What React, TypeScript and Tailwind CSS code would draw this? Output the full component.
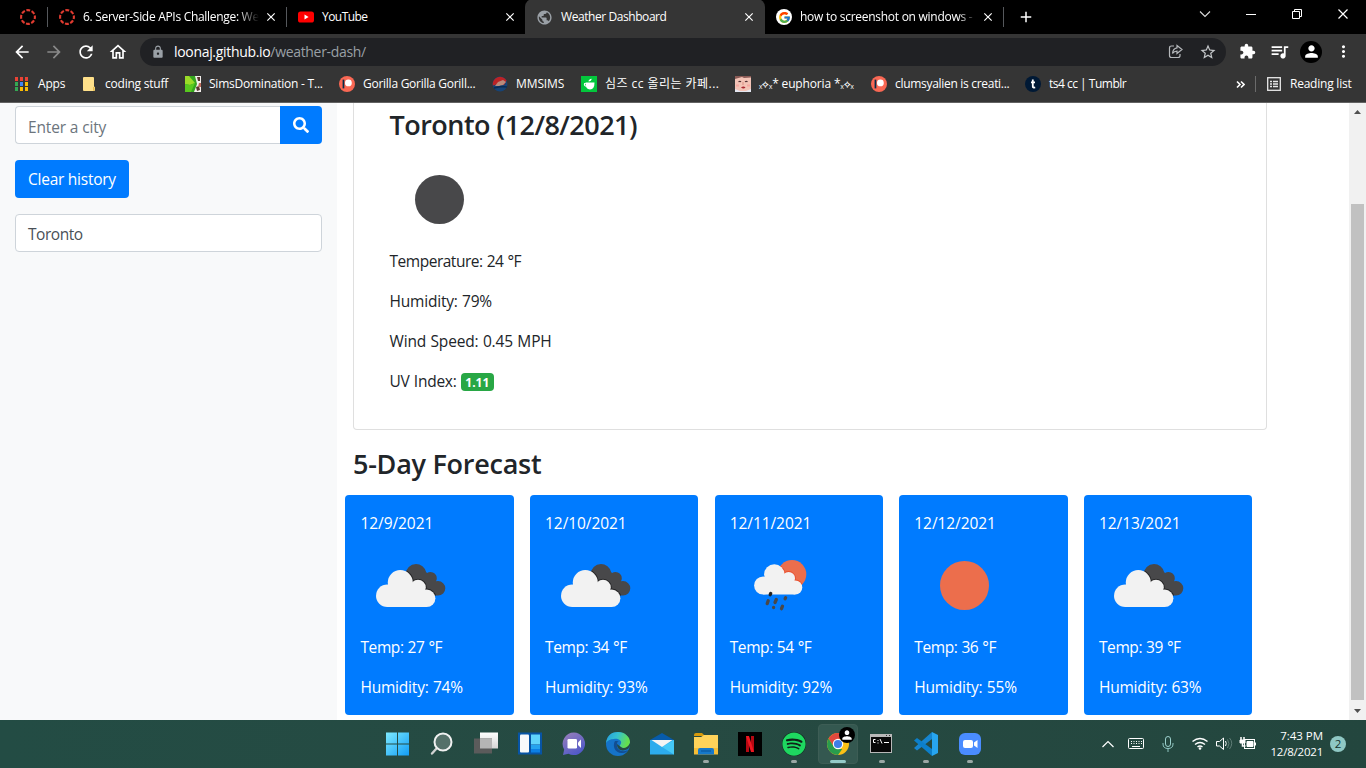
import React from "react";
import { FcGoogle } from "react-icons/fc";
import { FaSearch, FaSpotify } from "react-icons/fa";
import {
  MdArrowBack, MdArrowForward, MdRefresh, MdOutlineHome, MdLock, MdStarBorder,
  MdExtension, MdQueueMusic, MdPerson, MdMoreVert, MdPublic, MdClose, MdAdd,
} from "react-icons/md";

const CanvasRing = () => (
  <svg className="size-4 shrink-0" viewBox="0 0 16 16">
    <circle cx="8" cy="8" r="6.9" fill="none" stroke="#e03b30" strokeWidth="2.1" strokeDasharray="3.9 1.52" strokeDashoffset="1.9" />
  </svg>
);

const YouTube = () => (
  <svg className="size-4 shrink-0" viewBox="0 0 16 16">
    <rect y="2.5" width="16" height="11" rx="2.6" fill="#f00" />
    <path d="M6.5 5.6v4.8L10.6 8z" fill="#fff" />
  </svg>
);

const Patreon = () => (
  <svg className="size-4 shrink-0" viewBox="0 0 16 16">
    <circle cx="8" cy="8" r="8" fill="#f96854" />
    <rect x="3.6" y="3.6" width="1.7" height="8.8" fill="#052d49" />
    <circle cx="9.4" cy="6.9" r="3.4" fill="#fff" />
  </svg>
);

const AppsGrid = () => (
  <svg className="size-4 shrink-0" viewBox="0 0 16 16" shapeRendering="crispEdges">
    {["#ea4335", "#ea4335", "#ea4335", "#34a853", "#4285f4", "#fbbc04", "#34a853", "#fbbc04", "#fbbc04"].map((c, i) => (
      <rect key={i} x={1 + (i % 3) * 5} y={1 + Math.floor(i / 3) * 5} width="3" height="4" fill={c} />
    ))}
  </svg>
);

const Folder = () => (
  <svg className="size-4 shrink-0" viewBox="0 0 16 16">
    <path d="M2 2q0-1 1-1h9q1 0 1 1v8.500l1 .5v3q0 1-1 1H3q-1 0-1-1z" fill="#ffe08a" />
    <path d="M12 11h1.500v3.800H12z" fill="#e7bd4f" />
  </svg>
);

const Sims = () => (
  <svg className="size-4 shrink-0" viewBox="0 0 16 16">
    <path d="M0 0h16v16H0z" fill="#f3efec" />
    <path d="M0 0h10l2 8-3 8H0z" fill="#35a51e" />
    <path d="M0 0h4l6 7-5 2-5-1z" fill="#9bdc28" />
    <path d="M0 8l5 1 5-2-4 9H0z" fill="#58c91f" />
    <path d="M12 1h3v4h-2zM11 11l3-1 1 4-3 1z" fill="#59352f" />
    <path d="M14 7h2v4h-3z" fill="#bd6a5b" />
  </svg>
);

const MmSims = () => (
  <svg className="size-4 shrink-0" viewBox="0 0 16 16">
    <circle cx="8" cy="8" r="7.500" fill="#174375" />
    <path d="M.8 9.500A7.400 7.400 0 0 1 14.500 4.500L12 9 6 8z" fill="#bb2326" />
    <path d="M3 10l3-4 5-2 3 2-3 3-4 1z" fill="#b98b7c" />
    <path d="M2 12l7-1.500 6 .5" stroke="#0a2c55" fill="none" strokeWidth="1.500" />
  </svg>
);

const NaverCafe = () => (
  <svg className="size-4 shrink-0" viewBox="0 0 16 16">
    <path d="M0 0h16v16H0z" fill="#03c73c" />
    <path d="M4.500 6.500h9q0 7-4.500 7t-4.500-7z" fill="#fff" />
    <path d="M4.800 7.500H3.600q-.8 2 1.600 2.800" fill="none" stroke="#fff" strokeWidth="1.100" />
    <path d="M7.500 5.500q0-2.200 3.200-2.700-.2 2.400-3.200 2.700" fill="#fff" />
  </svg>
);

const Face = () => (
  <svg className="size-4 shrink-0" viewBox="0 0 16 16">
    <path d="M0 0h16v16H0z" fill="#f3c3b6" />
    <path d="M0 0h16v1.500L9 2 7 1 0 3z" fill="#8a5a55" />
    <path d="M3.500 5.800q1.500-1 2.500 0M10 5.800q1.500-1 2.500 0" stroke="#503033" strokeWidth="1.200" fill="none" />
    <path d="M8 6v3" stroke="#d78d80" />
    <path d="M6 11.500q2.500-2 4.500 0-2 2-4.500 0" fill="#a9262f" />
    <path d="M0 13l5 2h6l5-2v3H0z" fill="#e3e6f0" />
    <path d="M1 8.500h3v2H1zM12 8.500h3v2h-3z" fill="#f5a8a0" />
  </svg>
);

const Tumblr = () => (
  <svg className="size-4 shrink-0" viewBox="0 0 16 16">
    <circle cx="8" cy="8" r="8" fill="#001935" />
    <path d="M7.800 3.600v2.800H10M7.800 6.400H6M7.800 6v4.400q0 1.500 2.400 1" fill="none" stroke="#fff" strokeWidth="1.800" />
  </svg>
);

const TabClose = () => <MdClose className="size-[14px] shrink-0 text-white" />;

function Tab({ icon, title, box, text, sep }: { icon: React.ReactNode; title: string; box: string; text: string; sep?: boolean }) {
  return (
    <div className={`flex h-[34px] shrink-0 items-center ${box}`}>
      {icon}
      <div className={`ml-2 w-[176px] whitespace-nowrap text-white ${text}`}>{title}</div>
      <div className="flex-1" />
      <TabClose />
      {sep && <div className="ml-2 h-5 w-px bg-[#55585c]" />}
    </div>
  );
}

function Tabs() {
  return (
    <div className="flex h-[34px] bg-black text-[12px] tracking-[-0.25px]">
      <div className="flex w-12 shrink-0 items-center justify-between pl-5">
        <CanvasRing />
        <div className="h-5 w-px bg-[#55585c]" />
      </div>
      <Tab icon={<CanvasRing />} title="6. Server-Side APIs Challenge: We" box="w-[239px] pl-[11px]" text="tracking-[-0.3px] [mask-image:linear-gradient(90deg,#000_88%,transparent)]" sep />
      <Tab icon={<YouTube />} title="YouTube" box="w-[238px] pl-[11px] pr-[8px]" text="tracking-[-0.55px]" />
      <div className="-mt-px flex h-[35px] w-[240px] shrink-0 rounded-t-lg bg-[#353535] pt-px">
        <Tab icon={<MdPublic className="-ml-px size-[17px] text-[#9aa0a6]" />} title="Weather Dashboard" box="w-[240px] pl-[12px] pr-[9px]" text="tracking-[-0.43px]" />
      </div>
      <Tab icon={<div className="flex size-4 shrink-0 items-center justify-center rounded-full bg-white"><FcGoogle className="size-[13px]" /></div>} title="how to screenshot on windows -" box="w-[239px] pl-[11px]" text="tracking-[-0.27px] [mask-image:linear-gradient(90deg,#000_90%,transparent)]" sep />
      <div className="flex w-11 items-center justify-center"><MdAdd className="size-[18px] text-white" /></div>
      <div className="flex-1" />
      <svg className="h-[34px] w-[184px]" viewBox="0 0 184 34" fill="none" stroke="#fff">
        <path d="M18 11.500l5 5 5-5" stroke="#ddd" strokeWidth="1.100" />
        <path d="M64 14.500h10" />
        <path d="M110.500 11.500h7v7h-7zM112.500 11.500v-2h7v7h-2" />
        <path d="M156.500 9.500l9 9M165.500 9.500l-9 9" strokeWidth="1.200" />
      </svg>
    </div>
  );
}

function Toolbar() {
  return (
    <div className="flex h-8 items-center bg-[#353535] pl-3 pt-[3.500px] pb-0 text-white">
      <div className="-mt-[0.5px] flex h-7 items-center">
        <MdArrowBack className="mr-3 size-5" />
        <MdArrowForward className="mr-3 size-5 text-[#898989]" />
        <MdRefresh className="mr-3 size-5" />
        <MdOutlineHome className="mr-3 size-5" />
        <div className="flex h-7 w-[1086px] shrink-0 items-center rounded-full bg-[#202124] pl-[11px]">
          <MdLock className="size-[14px] text-[#9aa0a6]" />
          <div className="ml-[9px] text-[14px] tracking-[-0.32px] text-white">loonaj.github.io<span className="text-[#9aa0a6]">/weather-dash/</span></div>
          <div className="flex-1" />
          <svg className="mr-[16px] size-[15px]" viewBox="0 0 15 15" fill="none" stroke="#b5b8bb" strokeWidth="1.200">
            <path d="M6 2H3.500Q1.500 2 1.500 4v7.500q0 2 2 2H10q2 0 2-2V10" />
            <path d="M9 1.500l5 4-5 4V7.200q-3 0-4.500 2.300.5-5 4.500-5.600z" />
          </svg>
          <MdStarBorder className="mr-[9px] size-[18px] text-[#c4c7ca]" />
        </div>
        <MdExtension className="ml-[13px] size-[17px]" />
        <MdQueueMusic className="ml-[13px] size-[21px]" />
        <div className="ml-[10px] flex size-[22px] items-center justify-center rounded-full bg-black"><MdPerson className="size-[19px]" /></div>
        <MdMoreVert className="ml-[12px] size-[19px]" />
      </div>
    </div>
  );
}

const euphoria = (
  <>
    <span className="text-[10px]">ₓ⟡ₓ</span>* euphoria *<span className="text-[10px]">ₓ⟡ₓ</span>
  </>
);

const bookmarks: { icon: React.ReactNode; label: React.ReactNode; w: string }[] = [
  { icon: <AppsGrid />, label: "Apps", w: "w-[67px] tracking-[-0.2px]" },
  { icon: <Folder />, label: "coding stuff", w: "w-[104px] tracking-[-0.22px]" },
  { icon: <Sims />, label: "SimsDomination - T...", w: "w-[154px] tracking-[-0.23px]" },
  { icon: <Patreon />, label: "Gorilla Gorilla Gorill...", w: "w-[153px] tracking-[-0.26px]" },
  { icon: <MmSims />, label: "MMSIMS", w: "w-[89px] tracking-[-0.1px]" },
  { icon: <NaverCafe />, label: "심즈 cc 올리는 카페...", w: "w-[154px] tracking-[0.45px]" },
  { icon: <Face />, label: euphoria, w: "w-[136px] tracking-[-0.15px]" },
  { icon: <Patreon />, label: "clumsyalien is creati...", w: "w-[154px] tracking-[-0.3px]" },
  { icon: <Tumblr />, label: "ts4 cc | Tumblr", w: "w-[120px] tracking-[-0.5px]" },
];

function Bookmarks() {
  return (
    <div className="flex h-[37px] items-center border-b border-[#626262] bg-[#353535] pl-[14px] text-[12px] text-white">
      {bookmarks.map((b, i) => (
        <div key={i} className={`flex shrink-0 items-center gap-2 whitespace-nowrap ${b.w}`}>
          {b.icon}
          <span>{b.label}</span>
        </div>
      ))}
      <div className="flex-1" />
      <svg className="mr-[10px] size-[9px]" viewBox="0 0 9 9" fill="none" stroke="#fff" strokeWidth="1.600"><path d="M1 1.500l3 3-3 3M5 1.500l3 3-3 3" /></svg>
      <div className="mr-[11px] h-4 w-px bg-[#6b6b6b]" />
      <svg className="mr-[9px] size-[14px]" viewBox="0 0 14 14" fill="none" stroke="#e8e8e8" strokeWidth="1.300">
        <rect x=".7" y=".7" width="12.600" height="12.600" />
        <path d="M3 4.500h2M6 4.500h5M3 7h2M6 7h5M3 9.500h2M6 9.500h5" />
      </svg>
      <span className="w-[76px] whitespace-nowrap tracking-[-0.23px]">Reading list</span>
    </div>
  );
}

const cloudShape = (
  <>
    <circle cx="40.300" cy="46.500" r="12.500" />
    <circle cx="27.300" cy="59.700" r="11.300" />
    <circle cx="58" cy="51.500" r="7.800" />
    <circle cx="66.700" cy="62.300" r="8.700" />
    <path d="M27.300 50h35l4.400 12v9H27.300z" />
  </>
);

const Clouds = () => (
  <svg className="-ml-[0.5px] block size-[100px]" viewBox="0 0 100 100">
    <defs>
      <clipPath id="backCloud">
        <circle cx="56" cy="38.300" r="10.300" />
        <circle cx="70.500" cy="42.300" r="6.300" />
        <circle cx="78" cy="52.300" r="7.300" />
        <path d="M52 45l14-9 10 10 2 13.600H64z" />
      </clipPath>
    </defs>
    <g clipPath="url(#backCloud)">
      <path d="M40 20h50v50H40z" fill="#48484a" />
      <g fill="#252526" stroke="#252526" strokeWidth="2">{cloudShape}</g>
    </g>
    <g fill="#f2f2f2">{cloudShape}</g>
  </svg>
);

const rainCloud = (
  <>
    <circle cx="44.300" cy="38.500" r="10.200" />
    <circle cx="33.200" cy="49.500" r="9.100" />
    <circle cx="58.600" cy="42.400" r="6.400" />
    <circle cx="65.200" cy="51.500" r="7.100" />
    <path d="M33.200 41h29l3 10v7.600h-32z" />
  </>
);

const Rain = () => (
  <svg className="block size-[100px]" viewBox="0 0 100 100">
    <defs><clipPath id="sunClip"><circle cx="62" cy="38.300" r="14.300" /></clipPath></defs>
    <circle cx="62" cy="38.300" r="14.300" fill="#ec6e4c" />
    <g clipPath="url(#sunClip)" fill="#e8502f" stroke="#e8502f" strokeWidth="1.800">{rainCloud}</g>
    <g fill="#f2f2f2">{rainCloud}</g>
    <path d="M40.700 57.500l-.5 1.200" stroke="#222" strokeWidth="3.300" strokeLinecap="round" />
    <path d="M38.200 64.800l-1 2.800M46.300 63.500l-1.300 3M55.600 61.800l-.5 1M43.600 71.300v.2M52.500 70.200l-1 2.500" stroke="#48484a" strokeWidth="3.300" strokeLinecap="round" />
  </svg>
);

const Disc = ({ fill }: { fill: string }) => (
  <svg className="ml-[0.3px] block size-[100px]" viewBox="0 0 100 100"><circle cx="49.500" cy="49.500" r="24.500" fill={fill} /></svg>
);

const days = [
  { date: "12/9/2021", icon: <Clouds />, temp: 27, hum: 74 },
  { date: "12/10/2021", icon: <Clouds />, temp: 34, hum: 93 },
  { date: "12/11/2021", icon: <Rain />, temp: 54, hum: 92 },
  { date: "12/12/2021", icon: <Disc fill="#ec6e4c" />, temp: 36, hum: 55 },
  { date: "12/13/2021", icon: <Clouds />, temp: 39, hum: 63 },
];

function Page() {
  return (
    <div className="flex h-[617px] overflow-hidden bg-white text-[15.5px] leading-6 tracking-[-0.35px] text-[#212529]">
      <aside className="w-[337px] shrink-0 bg-[#f8f9fa] px-[15px] pt-[3px]">
        <div className="flex h-[38px]">
          <div className="flex flex-1 items-center rounded-l border border-r-0 border-[#ced4da] bg-white px-3 pt-[3px] tracking-[-0.15px] text-[#6c757d]">Enter a city</div>
          <div className="flex w-[42px] items-center justify-center rounded-r bg-[#007bff] text-white"><FaSearch className="size-4" /></div>
        </div>
        <div className="mt-4 flex h-[38px] w-[114px] items-center whitespace-nowrap rounded bg-[#007bff] px-[13px] tracking-[-0.25px] text-white">Clear history</div>
        <div className="mt-4 flex h-[38px] items-center rounded border border-[#ced4da] bg-white px-3 pt-0.5 tracking-[-0.45px] text-[#495057]">Toronto</div>
      </aside>
      <main className="flex-1">
        <div className="ml-4 h-[327px] w-[914px] rounded-b border border-t-0 border-[#dfdfdf] pl-[35.5px] pt-[6px]">
          <h2 className="mb-2 h-[33px] -translate-y-px text-[27px] font-semibold leading-[33px] tracking-[-0.52px]">Toronto (12/8/2021)</h2>
          <Disc fill="#48484a" />
          <p className="mb-4 -translate-y-px tracking-[-0.48px] [word-spacing:0.5px]">Temperature: 24 °F</p>
          <p className="mb-4 -translate-y-px tracking-[-0.2px] [word-spacing:0.5px]">Humidity: 79%</p>
          <p className="mb-4 -translate-y-px tracking-[-0.15px] [word-spacing:0.5px]">Wind Speed: 0.45 MPH</p>
          <p className="-translate-y-px tracking-[-0.25px] [word-spacing:0.5px]">UV Index: <span className="inline-block h-[18px] w-[33px] rounded bg-[#28a745] text-center text-[12px] font-bold leading-[19px] tracking-normal text-white">1.11</span></p>
        </div>
        <h2 className="ml-4 mt-[18px] h-[34px] -translate-y-px text-[27px] font-semibold leading-[34px] tracking-[-0.26px]">5-Day Forecast</h2>
        <div className="ml-[8.25px] mt-[13px] flex gap-[16.2px] text-white">
          {days.map((d) => (
            <div key={d.date} className="h-[220px] w-[168.45px] shrink-0 rounded bg-[#007bff] pl-[15.2px] pt-[17px]">
              <p className="-translate-y-px tracking-[-0.07px]">{d.date}</p>
              {d.icon}
              <p className="mb-4 -translate-y-px tracking-[-0.4px] [word-spacing:0.3px]">Temp: {d.temp} °F</p>
              <p className="-translate-y-px tracking-[-0.2px] [word-spacing:0.5px]">Humidity: {d.hum}%</p>
            </div>
          ))}
        </div>
      </main>
      <div className="flex w-[17px] flex-col items-center bg-[#f1f1f1]">
        <svg className="h-[17px] w-[17px]" viewBox="0 0 17 17"><path d="M5 11h7L8.500 7z" fill="#505050" /></svg>
        <div className="mt-[84px] h-[496px] w-[13px] bg-[#c1c1c1]" />
        <svg className="mt-[3px] h-[17px] w-[17px]" viewBox="0 0 17 17"><path d="M5 6h7l-3.500 4z" fill="#505050" /></svg>
      </div>
    </div>
  );
}

const Chrome = () => (
  <svg className="size-6" viewBox="0 0 24 24">
    <circle cx="12" cy="12" r="11" fill="#fbc116" />
    <path d="M2.500 6.500A11 11 0 0 1 21.500 6.500L12 7 7.700 14.500z" fill="#e0493e" />
    <path d="M2.500 6.500l5.200 8 4.300 2.500h4.300L12 23A11 11 0 0 1 2.500 6.500" fill="#299c4d" />
    <circle cx="12" cy="12" r="5.200" fill="#fff" />
    <circle cx="12" cy="12" r="4.100" fill="#3f7ee8" />
  </svg>
);

const taskIcons: { el: React.ReactNode; run?: boolean; active?: boolean }[] = [
  { el: (
    <svg className="size-6" viewBox="0 0 24 24"><defs><linearGradient id="win" x1="0" y1="0" x2="1" y2="1"><stop stopColor="#7eeaff" /><stop offset="1" stopColor="#129df5" /></linearGradient></defs><path d="M0 .5h11v11H0zM12 .5h11v11H12zM0 12.500h11v11H0zM12 12.500h11v11H12z" fill="url(#win)" /></svg>
  ) },
  { el: (
    <svg className="size-6" viewBox="0 0 24 24" fill="none" strokeLinecap="round"><path d="M7 16l-5 5.500" stroke="#d0d2d2" strokeWidth="2.400" /><circle cx="13" cy="10" r="8.500" fill="#55716a" stroke="#f0f1f1" strokeWidth="2" /></svg>
  ) },
  { el: (
    <svg className="size-6" viewBox="0 0 24 24"><defs><linearGradient id="tv" x2="0" y2="1"><stop stopColor="#fff" /><stop offset="1" stopColor="#d5d5d5" /></linearGradient></defs><path d="M6 .5h18v16H6z" fill="url(#tv)" /><path d="M0 6.500h18v15H0z" fill="#5b5b5b" /><path d="M6 6.500h12v10H6z" fill="#b5b5b5" /></svg>
  ) },
  { el: (
    <svg className="size-6" viewBox="0 0 24 24"><path d="M0 .5h24v22H0z" fill="#0754a5" /><rect x="2" y="2.500" width="9" height="18" rx="1" fill="#f8f9fa" /><path d="M13 2.500h9v10h-9z" fill="#60d4fb" /><path d="M13 13h9v4h-9z" fill="#25a3ef" /><path d="M13 17h9v3.500h-9z" fill="#0c80e5" /></svg>
  ) },
  { el: (
    <svg className="size-6" viewBox="0 0 24 24"><defs><linearGradient id="chat" x2=".6" y2="1"><stop stopColor="#9b80b9" /><stop offset="1" stopColor="#5059c9" /></linearGradient></defs><path d="M12 .5a11.300 11.300 0 1 1-5.500 21.300L1 23l1.200-5.500A11.300 11.300 0 0 1 12 .5" fill="url(#chat)" /><rect x="5.500" y="7" width="9.500" height="9.500" rx="1.300" fill="#fff" /><path d="M16 10.500l3-3v8.500l-3-3z" fill="#fff" /></svg>
  ) },
  { el: (
    <svg className="size-6" viewBox="0 0 24 24"><defs><linearGradient id="edge" x2="1" y2=".3"><stop stopColor="#259ddf" /><stop offset=".5" stopColor="#35c1cf" /><stop offset="1" stopColor="#65e04c" /></linearGradient></defs><circle cx="12" cy="12" r="12" fill="#1573c9" /><path d="M0 11C1 3 6 0 12 0c7 0 12 5 12 10 0 4-3 6-6 6-4 0-5-2-3.500-3.500C17 9 12 6 8 7c-4 0-7 2-8 4" fill="url(#edge)" /><path d="M9 9c-3 5 0 13 8 12 2 0 4-1 5-3-6 3-12 0-11-6 0-2 1-3 2-3z" fill="#124e93" /><path d="M11 12c0 6 5 8 11 5l2-3v-3c-2 5-7 6-9 4z" fill="#254b45" /></svg>
  ) },
  { el: (
    <svg className="size-6" viewBox="0 0 24 24"><path d="M0 8l12-7 12 7v3H0z" fill="#075baa" /><path d="M0 8h24v14.500H0z" fill="#2caced" /><path d="M24 8v14.500L12 15z" fill="#45c9f7" /><path d="M1.500 8h21L12 15z" fill="#f4f4f4" /></svg>
  ) },
  { run: true, el: (
    <svg className="size-6" viewBox="0 0 24 24"><path d="M0 3q0-2 2-2h6l3 3H0z" fill="#d79a0b" /><path d="M0 5h7l3-2h14v19H0z" fill="#ffd35a" /><path d="M0 16h24v6.500H0z" fill="#f6be36" /><path d="M4 22.500V18q0-2 2-2h12q2 0 2 2v4.500z" fill="#1679ca" /><path d="M7 19h10" stroke="#075297" /></svg>
  ) },
  { el: (
    <svg className="size-6" viewBox="0 0 24 24"><path d="M0 0h24v24H0z" fill="#000" /><path d="M8 4h3v16H8zM13 4h3v16h-3z" fill="#b50812" /><path d="M8 4h3l5 16h-3z" fill="#ee1721" /></svg>
  ) },
  { run: true, el: <div className="flex size-6 items-center justify-center rounded-full bg-[#102018]"><FaSpotify className="size-6 text-[#1ed760]" /></div> },
  { run: true, active: true, el: (
    <div className="relative"><Chrome /><div className="absolute -right-[5px] -top-[5px] flex size-4 items-center justify-center rounded-full bg-black"><MdPerson className="size-[14px] text-white" /></div></div>
  ) },
  { run: true, el: (
    <svg className="size-6" viewBox="0 0 24 24"><rect x="0" y="2" width="22" height="19" fill="#b8b8b8" /><path d="M1 5h20v15H1z" fill="#080808" /><path d="M5.500 7.500h-2v3h2M8 8v1M8 10.500v1M10 7l2 4.500M14 10.500h5" stroke="#fff" fill="none" /><path d="M16 3.500h1M19 3.500h1" stroke="#333" /></svg>
  ) },
  { run: true, el: (
    <svg className="size-6" viewBox="0 0 24 24"><path d="M18 0l6 3v18l-6 3z" fill="#27a5ef" /><path d="M18 0v7L3 18.500 0 16z" fill="#1685cf" /><path d="M18 24v-7L3 6 0 8.500z" fill="#0c7fca" /></svg>
  ) },
  { run: true, el: (
    <svg className="size-6" viewBox="0 0 24 24"><rect x="1" y="1" width="22" height="22" rx="6" fill="#4a8cff" /><rect x="5" y="8" width="10" height="8" rx="2" fill="#fff" /><path d="M16 10.500l3.500-2.500v8L16 13.500z" fill="#fff" /></svg>
  ) },
];

function Taskbar() {
  return (
    <div className="flex h-12 items-center bg-linear-to-r from-[#234c44] via-[#264a42] to-[#23463e] pl-[376px] text-white">
      {taskIcons.map((t, i) => (
        <div key={i} className="flex h-12 w-11 shrink-0 items-center justify-center">
          <div className={`relative flex size-10 items-center justify-center rounded ${t.active ? "border border-[#3d5d55] bg-[#345850]" : ""}`}>
            {t.el}
            {t.run && <div className={`absolute h-[3px] rounded-full ${t.active ? "bottom-0 w-4 bg-[#94cbc8]" : "bottom-px w-1.5 bg-[#9aa8a5]"}`} />}
          </div>
        </div>
      ))}
      <div className="flex-1" />
      <svg className="h-12 w-[166px]" viewBox="0 0 166 48" fill="none" stroke="#fff">
        <path d="M2.500 27l5.500-5.500 5.500 5.500" strokeWidth="1.200" />
        <rect x="28.500" y="18.500" width="15" height="10" rx="1" />
        <path d="M31 21.500h11M31 23.500h11" strokeDasharray="1 1.500" /><path d="M32 26.500h8" />
        <rect x="65.500" y="16.500" width="5" height="10" rx="2.500" stroke="#9bd0cc" />
        <path d="M63 23v1q0 4.500 5 4.500t5-4.500v-1M68 28.500V32" stroke="#8ec4c0" />
        <g strokeWidth="1.500"><path d="M92.500 21.500q7.500-6 15 0M95 24.500q5-4 10 0M97.500 27q2.500-2 5 0" /></g>
        <circle cx="100" cy="28.500" r="1.300" fill="#fff" stroke="none" />
        <path d="M116.500 21.500h3l4-3.500v11.500l-4-3.500h-3zM125.500 21q1.500 2.500 0 5" /><path d="M127.500 19.500q3 4 0 8.500M129.500 18q4.500 5 0 11" stroke="#607d77" />
        <rect x="144.500" y="19.500" width="10" height="9" /><path d="M147 21.500h6v5h-6zM155.500 22.500v3" fill="#fff" /><path d="M141 17v3M144 17v3M142.500 20v6h3" strokeWidth="1.500" /><path d="M140 20h5v3h-5z" fill="#fff" />
      </svg>
      <div className="w-[57px] whitespace-nowrap text-right text-[11.500px] leading-4"><span className="tracking-[-0.05px]">7:43 PM</span><br /><span className="tracking-[-0.22px]">12/8/2021</span></div>
      <div className="ml-[7px] mr-[20px] flex size-4 items-center justify-center rounded-full bg-[#8fc8c4] text-[11.500px] text-[#15332d]">2</div>
    </div>
  );
}

export default function App() {
  return (
    <div className="h-[768px] w-[1366px] overflow-hidden font-['Open_Sans','Noto_Sans_CJK_KR',sans-serif]">
      <Tabs />
      <Toolbar />
      <Bookmarks />
      <Page />
      <Taskbar />
    </div>
  );
}
